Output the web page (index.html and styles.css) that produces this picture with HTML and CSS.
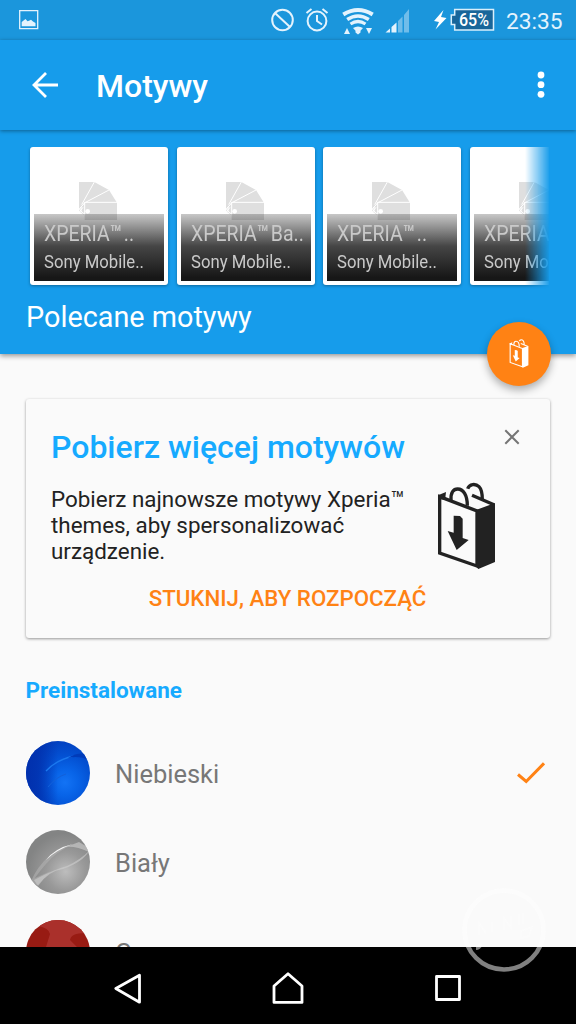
FILE: index.html
```html
<!DOCTYPE html>
<html lang="pl">
<head>
<meta charset="utf-8">
<title>Motywy</title>
<link rel="stylesheet" href="styles.css">
</head>
<body>
<svg class="defs" aria-hidden="true">
  <defs>
    <symbol id="bag" viewBox="411 291 177 264">
      <g fill="none" stroke="currentColor" stroke-width="10">
        <path d="M419 335L531 378V543L419 504z"/>
        <path d="M453 345C452 322 460 312 473 312C490 312 502 331 502 362"/>
        <path d="M503 311C508 296 527 295 537 305C547 315 547 330 547 344"/>
        <path d="M516 331L582 359"/>
      </g>
      <path fill="currentColor" d="M530 374L585 354V531L535 552L530 547zM414 331L438 321L436 338L447 347L416 341z"/>
      <path fill="currentColor" d="M461 392L480 393L488 401V459L506 465L470 495L443 438L461 443z"/>
    </symbol>
    <symbol id="fan" viewBox="0 0 114 114">
      <path fill="#dfdfdf" d="M0 0H46L90 24L113 61H114V114H17V100L0 88z"/>
      <path fill="none" stroke="#fff" stroke-width="3" d="M46 0L8 68M90 24L14 64M114 61H17V100M0 82L17 63M0 82L17 97M0 91L12 76M6 75V92"/>
      <circle cx="26" cy="88" r="7" fill="#fff"/>
    </symbol>
  </defs>
</svg>
<div class="screen">
  <header class="status">
    <svg class="status-photo" width="20" height="20" viewBox="0 0 20 20"><path fill="none" stroke="#e4f3fd" stroke-width="1.3" d="M.7.7h18v18H.7z"/><path fill="#e4f3fd" d="M2.7 16.200V12l2.200-1.800L6.500 9l2 2.300 1.500-.5 2-1 2 1.700 2.500 1.500v3.200z"/></svg>
    <svg class="status-icons" width="240" height="40" viewBox="260 0 240 40">
      <g fill="none" stroke="#e4f3fd" stroke-width="2">
        <circle cx="282.500" cy="20" r="10.300"/><path d="M275 13l15 14"/>
        <circle cx="317" cy="21" r="9.400"/><path d="M317 15v6l5 3.500M306.500 13l5-4M327.500 13l-5-4"/>
      </g>
      <g fill="none" stroke="#e4f3fd" stroke-width="4">
        <path d="M343.300 14.500Q358 5.500 372.700 14.500"/>
        <path d="M347.200 19.500Q358 12.500 368.800 19.500" stroke-width="3.500"/>
        <path d="M350.500 24Q358 19 365.500 24" stroke-width="3.200"/>
      </g>
      <path fill="#e4f3fd" d="M353 28q5-3 10 0l-2.500 2.800v1.700L358 34.500l-2.500-2v-1.700zM344 34l3-6 3 6zM366 28h6l-3 6z"/>
      <path fill="#e4f3fd" d="M385.500 32.500l4.500-4v4zM391.500 27l5-4.500v10h-5z"/>
      <path fill="#70bdea" d="M398 21l4.500-4.500v16H398zM404 15l5-6v23.500h-5z"/>
      <path fill="#fff" d="M443.500 10l-9.500 11 5 1-3.500 7.500 11-11.500-5.500-1z"/>
      <path fill="#18669a" stroke="#d9effb" stroke-width="1.500" d="M454.700 9.500H493.500V30H454.700V24.500H451.300V15H454.700z"/>
      <text class="battery" x="459" y="26" textLength="30" lengthAdjust="spacingAndGlyphs">65%</text>
    </svg>
    <span class="clock">23:35</span>
  </header>
  <div class="appbar">
    <svg width="28" height="28" viewBox="31 71 28 28"><path fill="none" stroke="#fff" stroke-width="2.800" d="M58 85H35M46 73L34 85l12 12"/></svg>
    <h1>Motywy</h1>
    <svg class="more" width="8" height="28" viewBox="0 0 8 28" fill="#fff"><circle cx="4" cy="4" r="3.400"/><circle cx="4" cy="13.700" r="3.400"/><circle cx="4" cy="23.300" r="3.400"/></svg>
  </div>
  <section class="featured">
    <div class="carousel">
      <article class="tile"><svg class="fan"><use href="#fan"/></svg><div class="caption"><b>XPERIA<i>™</i> ..</b><span>Sony Mobile..</span></div></article>
      <article class="tile"><svg class="fan"><use href="#fan"/></svg><div class="caption"><b>XPERIA<i>™</i> Ba..</b><span>Sony Mobile..</span></div></article>
      <article class="tile"><svg class="fan"><use href="#fan"/></svg><div class="caption"><b>XPERIA<i>™</i> ..</b><span>Sony Mobile..</span></div></article>
      <article class="tile"><svg class="fan"><use href="#fan"/></svg><div class="caption"><b>XPERIA<i>™</i> ..</b><span>Sony Mobile..</span></div></article>
    </div>
    <h2>Polecane motywy</h2>
    <div class="fab"><svg width="20" height="29"><use href="#bag"/></svg></div>
  </section>
  <main>
    <section class="promo">
      <div class="promo-head">
        <h3>Pobierz więcej motywów</h3>
        <svg width="16" height="16" viewBox="0 0 16 16"><path fill="none" stroke="#757575" stroke-width="2" d="M1.300 1.300l13.400 13.400M14.700 1.300L1.300 14.700"/></svg>
      </div>
      <div class="promo-body">
        <p>Pobierz najnowsze motywy Xperia™<br>themes, aby spersonalizować<br>urządzenie.</p>
        <svg width="59" height="88"><use href="#bag"/></svg>
      </div>
      <div class="action">STUKNIJ, ABY ROZPOCZĄĆ</div>
    </section>
    <h4>Preinstalowane</h4>
    <ul>
      <li>
        <svg class="swatch" viewBox="0 0 64 64">
          <defs>
            <radialGradient id="blue" cx=".61" cy=".65" r=".66"><stop offset="0" stop-color="#1373f5"/><stop offset=".3" stop-color="#0864e8"/><stop offset=".65" stop-color="#0350d2"/><stop offset="1" stop-color="#0241c0"/></radialGradient>
            <linearGradient id="shade"><stop offset="0" stop-color="#0130ad"/><stop offset=".2" stop-color="#0130ad" stop-opacity=".8"/><stop offset=".5" stop-color="#0130ad" stop-opacity="0"/></linearGradient>
          </defs>
          <rect width="64" height="64" fill="url(#blue)"/>
          <rect width="64" height="64" fill="url(#shade)"/>
          <path fill="none" stroke="#1b78ee" stroke-width="1.300" d="M20 30Q30 19 48 15"/>
          <path fill="#003bb9" d="M42 17Q53 10 64 14v6Q54 14 42 17z"/>
          <path fill="none" stroke="#1360d8" d="M22 46Q30 36 40 33"/>
        </svg>
        <span>Niebieski</span>
        <svg class="check" width="28" height="22" viewBox="0 0 28 22"><path fill="none" stroke="#ff8214" stroke-width="3" d="M1 12.500l8.200 7L27 1.300"/></svg>
      </li>
      <li>
        <svg class="swatch" viewBox="0 0 64 64">
          <defs><radialGradient id="gray" cx=".62" cy=".65" r=".6"><stop offset="0" stop-color="#bdbdbd"/><stop offset=".5" stop-color="#999"/><stop offset="1" stop-color="#838484"/></radialGradient></defs>
          <rect width="64" height="64" fill="url(#gray)"/>
          <path fill="#b0b0b0" opacity=".6" d="M5 51Q18 22 46 15Q31 21 20 34Q13 42 9 48L25 41Q16 51 10 56z"/>
          <path fill="#cecece" opacity=".6" d="M8 50Q29 39 41 36Q54 30 63 21Q57 32 37 39Q22 41 12 56zM40 17L53 12L63 18V22Q50 16 40 17z"/>
          <path fill="#f5f5f5" d="M20 30Q29 18 47 14Q30 20 20 30z"/>
        </svg>
        <span>Biały</span>
      </li>
      <li>
        <svg class="swatch" viewBox="0 0 64 64"><rect width="64" height="64" fill="#981b13"/><path fill="#aa302b" d="M16 0H50L63 13Q45 12 44 20L51 27H20L24 14Q23 8 12 6z"/></svg>
        <span>Czerwony</span>
      </li>
    </ul>
  </main>
  <nav>
    <svg width="28" height="32" viewBox="0 0 28 32"><path d="M25.500 3.200v27L1.800 16.500z"/></svg>
    <svg width="32" height="32" viewBox="0 0 32 32"><path d="M2 30.400V14L16 1.800 30 14v16.400z"/></svg>
    <svg width="28" height="28" viewBox="0 0 28 28"><path d="M2.500 2.500h23v23h-23z"/></svg>
  </nav>
  <svg class="watermark" width="84" height="84" viewBox="0 0 84 84" fill="none" stroke="#fff">
    <circle cx="42" cy="42" r="39.500" stroke-width="4.500"/>
    <path stroke-width="1.500" opacity=".6" d="M17 47v-12l7 10M30 44v-10M42 42V30l7 10V28M57 37V26M61 36V25M59 43l11-4-3 9-8 2z"/>
    <path stroke-width="4" d="M14 60q3 0 5-4"/>
  </svg>
</div>
</body>
</html>
```
FILE: styles.css
```css
* { box-sizing: border-box; }
body { margin: 0; font-family: Roboto, "Liberation Sans", sans-serif; }
h1, h2, h3, h4, p, ul { margin: 0; padding: 0; }
svg { display: block; flex: none; }
.defs { position: absolute; width: 0; height: 0; }
.screen { position: relative; width: 576px; height: 1024px; overflow: hidden; display: flex; flex-direction: column; background: #fafafa; }
.status { height: 40px; flex: none; display: flex; align-items: center; background: #1b96dc; }
.status-photo { margin-left: 19px; }
.status-icons { margin-left: 221px; }
.battery { font-size: 17.5px; font-weight: 500; fill: #fff; }
.clock { margin-left: 6px; padding-top: 3px; font-size: 22.700px; color: #e4f3fd; white-space: nowrap; }
.appbar { position: relative; z-index: 1; height: 90px; flex: none; display: flex; align-items: center; padding-left: 31px; background: #169ceb; box-shadow: 0 1px 4px rgba(0, 0, 0, .4); }
.appbar h1 { margin-left: 37px; padding-top: 2px; font-size: 32px; line-height: 40px; font-weight: 500; color: #fff; }
.more { margin-left: auto; margin-right: 31px; }
.featured { position: relative; height: 224px; flex: none; padding: 17px 27px 0 26px; background: #169ceb; box-shadow: 0 2px 5px rgba(0, 0, 0, .4); }
.carousel { display: flex; gap: 8.700px; height: 142px; padding-left: 4px; overflow: hidden; -webkit-mask-image: linear-gradient(to right, #000 499px, transparent 524px); mask-image: linear-gradient(to right, #000 499px, transparent 524px); }
.tile { width: 138px; height: 138px; flex: none; padding: 34.500px 4px 0; border-radius: 3px; background: #fff; box-shadow: 0 1px 3px rgba(0, 0, 0, .35); }
.fan { width: 38px; height: 38px; margin-left: 45px; }
.caption { position: relative; height: 66.500px; margin-top: -5.500px; padding: 6px 0 0 10px; overflow: hidden; color: #c9c9c9; background: linear-gradient(rgba(23, 23, 23, .24), rgba(23, 23, 23, .8) 48%, #171717 95%); }
.caption b, .caption span { display: block; width: max-content; white-space: nowrap; transform-origin: left; }
.caption b { font-size: 22.400px; line-height: 26px; font-weight: 400; word-spacing: -2.500px; transform: scaleX(.87); }
.caption i { font-style: normal; font-weight: 500; letter-spacing: -1px; }
.caption span { margin-top: 4px; font-size: 19.200px; line-height: 24px; transform: scaleX(.87); }
.featured h2 { margin-top: 11px; font-size: 28.800px; line-height: 34px; font-weight: 400; color: #fff; }
.fab { position: absolute; right: 25.500px; bottom: -31.500px; width: 64px; height: 64px; display: grid; place-items: center; border-radius: 50%; color: #fff; background: #ff8214; box-shadow: 0 4px 8px rgba(0, 0, 0, .32); }
main { height: 593px; flex: none; overflow: hidden; padding: 45px 26px 0 25.500px; }
.promo { height: 239px; padding: 29px 26px 0 25.500px; border-radius: 3px; background: #fafafa; box-shadow: 0 1px 3px rgba(0, 0, 0, .4); }
.promo-head { display: flex; justify-content: space-between; align-items: flex-start; }
.promo-head h3 { font-size: 32px; line-height: 38px; font-weight: 500; color: #16aaff; white-space: nowrap; }
.promo-head svg { margin: 1px 4px 0 0; }
.promo-body { display: flex; justify-content: space-between; height: 98px; padding-top: 16px; }
.promo-body p { padding-top: 4px; font-size: 22.400px; line-height: 26px; color: #222; white-space: nowrap; }
.promo-body svg { margin: 0 28px 0 0; color: #222; }
.action { margin-top: 21px; text-align: center; font-size: 22.300px; line-height: 26px; font-weight: 500; color: #ff8214; white-space: nowrap; }
h4 { margin-top: 39px; font-size: 22.500px; line-height: 26px; font-weight: 700; color: #16aaff; }
ul { margin-top: 37.500px; list-style: none; }
li { display: flex; align-items: center; height: 64px; margin-bottom: 25.600px; font-size: 25.500px; color: #777; }
.swatch { width: 64px; height: 64px; margin-right: 25.500px; border-radius: 50%; }
li span { padding-top: 2px; }
.check { margin-left: auto; margin-right: 5px; }
nav { flex: 1; display: flex; align-items: center; justify-content: space-between; padding: 4px 114px 0; background: #000; }
nav path { fill: none; stroke: #fff; stroke-width: 2.800; stroke-linejoin: round; }
.watermark { position: absolute; left: 462px; top: 888px; opacity: .5; }
```
